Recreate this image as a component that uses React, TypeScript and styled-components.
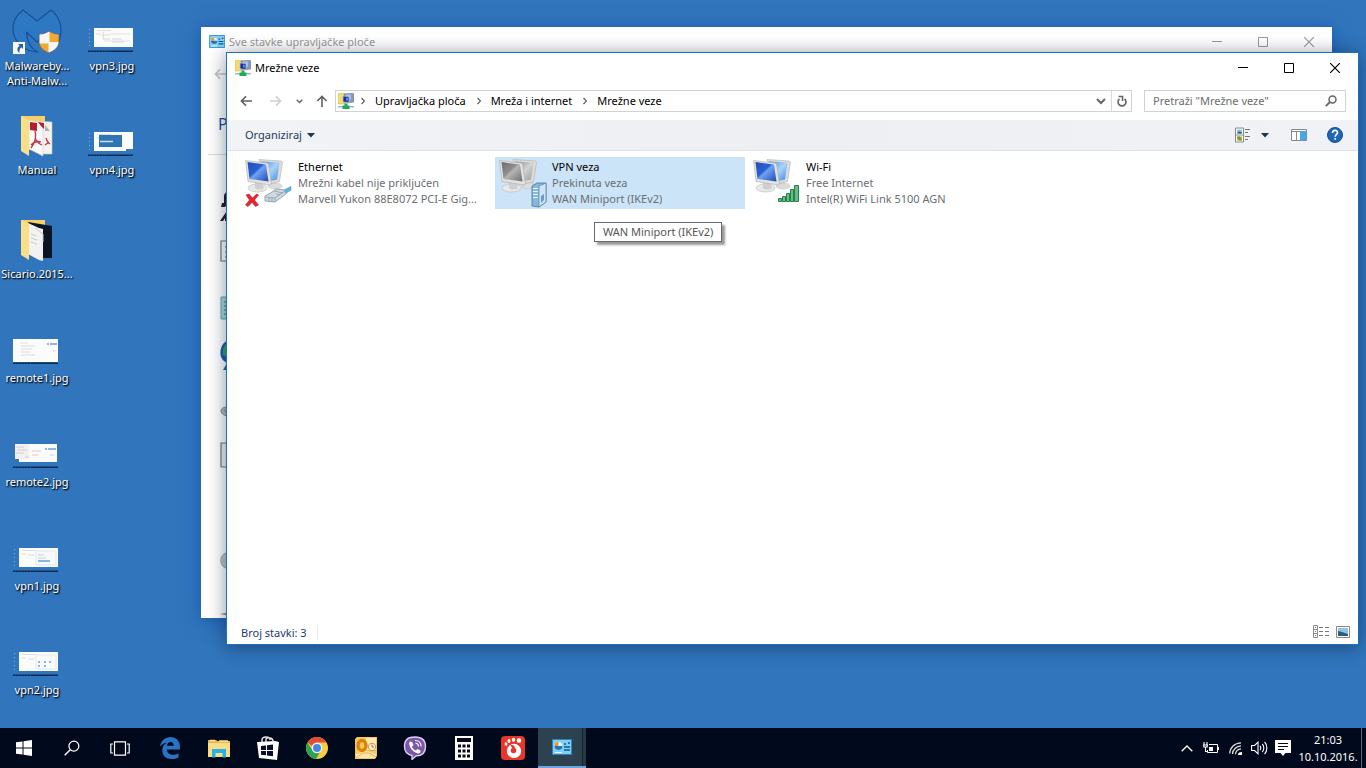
import React from 'react';
import styled, { createGlobalStyle } from 'styled-components';

const GlobalStyle = createGlobalStyle`
  * { box-sizing: border-box; }
  html, body { margin: 0; height: 100%; }
  body {
    font: 11px/16px "Noto Sans", "Open Sans", sans-serif;
    color: #000;
    overflow: hidden;
  }
  button, input { font: inherit; color: inherit; }
  button { background: none; border: 0; padding: 0; cursor: default; }
  a { color: inherit; text-decoration: none; }
  ul, ol { list-style: none; margin: 0; padding: 0; }
  h1, h2, p { margin: 0; font: inherit; }
  svg { display: block; flex: none; }
`;

const Screen = styled.div`
  display: flex;
  flex-direction: column;
  min-height: 100vh;
  background: #3176bd;
`;

const Desktop = styled.main`
  position: relative;
  flex: 1;
`;

/* ---------- desktop shortcuts ---------- */

const ShortcutGrid = styled.ul`
  display: grid;
  grid-auto-flow: column;
  grid-template-rows: repeat(7, 104px);
  grid-auto-columns: 75px;
`;

const Shortcut = styled.button`
  display: flex;
  flex-direction: column;
  align-items: center;
  gap: 4px;
  width: 100%;
  padding: 6px 1px 0 0;
  color: #fff;
  line-height: 15px;
  text-shadow: 1px 1px 2px #000, 1px 1px 1px #0a2a50;
`;

/* ---------- windows ---------- */

const Window = styled.section<{ $active?: boolean }>`
  position: absolute;
  display: flex;
  flex-direction: column;
  top: ${(p) => (p.$active ? 52 : 26)}px;
  left: ${(p) => (p.$active ? 226 : 200)}px;
  right: ${(p) => (p.$active ? 7 : 33)}px;
  bottom: ${(p) => (p.$active ? 83 : 109)}px;
  background: #fff;
  border: 1px solid ${(p) => (p.$active ? '#1a73bf' : '#2b69a8')};
  box-shadow: ${(p) => (p.$active
    ? '0 2px 18px rgba(0, 0, 0, 0.36), 0 2px 18px rgba(0, 80, 190, 0.12)'
    : '0 2px 16px rgba(0, 60, 170, 0.5)')};
  overflow: ${(p) => (p.$active ? 'visible' : 'hidden')};
`;

const TitleBar = styled.header<{ $dim?: boolean }>`
  display: flex;
  align-items: center;
  height: 29px;
  padding-left: 8px;
  color: ${(p) => (p.$dim ? '#999' : '#000')};
  h1, h2 { flex: 1; padding-left: 4px; }
`;

const CaptionButton = styled.button`
  display: grid;
  place-items: center;
  width: 46px;
  height: 29px;
`;

const NavRow = styled.nav`
  display: flex;
  align-items: center;
  height: 38px;
  padding: 0 12px 0 2px;
`;

const NavButton = styled.button<{ $w: number }>`
  display: grid;
  place-items: center;
  width: ${(p) => p.$w}px;
  height: 22px;
`;

const AddressBar = styled.div`
  display: flex;
  align-items: stretch;
  flex: 1;
  height: 22px;
  border: 1px solid #d2d2d2;
  padding-left: 2px;
`;

const Crumbs = styled.ol`
  display: flex;
  align-items: center;
  gap: 11px;
  flex: 1;
  li { display: flex; align-items: center; gap: 10px; }
  li:first-child { margin-right: -4px; }
`;

const AddressButton = styled.button<{ $divided?: boolean }>`
  display: grid;
  place-items: center;
  width: 20px;
  border-left: ${(p) => (p.$divided ? '1px solid #d9d9d9' : '0')};
`;

const SearchBox = styled.label`
  display: flex;
  align-items: center;
  width: 202px;
  height: 22px;
  margin-left: 12px;
  padding: 0 8px;
  border: 1px solid #d2d2d2;
  input {
    flex: 1;
    min-width: 0;
    border: 0;
    padding: 0;
    outline: 0;
    background: none;
  }
  input::placeholder { color: #6d6d6d; opacity: 1; }
`;

const CommandBar = styled.div`
  display: flex;
  align-items: center;
  height: 31px;
  padding: 0 15px 0 18px;
  color: #1e3a55;
  background: linear-gradient(90deg, #f2f3f6, #edeff2 50%, #f0f2f5);
  border-bottom: 1px solid #dfe1e8;
`;

const MenuButton = styled.button`
  display: flex;
  align-items: center;
  gap: 5px;
`;

const CommandGroup = styled.div`
  display: flex;
  align-items: center;
  margin-left: auto;
  gap: 20px;
`;

const ViewButton = styled(MenuButton)`
  gap: 10px;
  padding-right: 2px;
`;

const Connections = styled.ul`
  display: flex;
  flex-wrap: wrap;
  align-content: flex-start;
  flex: 1;
  gap: 4px;
  padding: 6px 14px;
`;

const ConnectionItem = styled.li`
  position: relative;
  width: 250px;
`;

const Connection = styled.button<{ $selected?: boolean }>`
  display: flex;
  gap: 5px;
  width: 100%;
  height: 52px;
  padding: 0 2px;
  text-align: left;
  color: #6b6e73;
  background: ${(p) => (p.$selected ? '#cce4f7' : 'none')};
`;

const ConnectionText = styled.span`
  display: flex;
  flex-direction: column;
  min-width: 0;
  padding-top: 2px;
  strong { font-weight: 400; color: #000; }
  span {
    overflow: hidden;
    text-overflow: ellipsis;
    white-space: nowrap;
  }
`;

const Tooltip = styled.div`
  position: absolute;
  top: 65px;
  left: 99px;
  padding: 1px 8px;
  color: #575757;
  white-space: nowrap;
  background: #fff;
  border: 1px solid #6a6a6a;
  box-shadow: 3px 3px 2px rgba(0, 0, 0, 0.4);
`;

const StatusBar = styled.footer`
  display: flex;
  align-items: center;
  justify-content: space-between;
  height: 22px;
  padding: 0 8px 0 14px;
  color: #1e3a6e;
`;

const ItemCount = styled.span`
  padding-right: 10px;
  border-right: 1px solid #ececec;
`;

const ViewModes = styled.div`
  display: flex;
  gap: 7px;
  padding-bottom: 3px;
`;

/* ---------- window behind ---------- */

const BackNav = styled.div`
  display: flex;
  align-items: center;
  height: 36px;
  padding: 0 0 0 13px;
`;

const BackBody = styled.div`
  flex: none;
`;

const BackHeading = styled.p`
  margin: 0 7px 24px;
  padding: 20px 10px 18px;
  font-size: 16px;
  line-height: 24px;
  color: #1d4f96;
  border-bottom: 1px solid #dcdcdc;
`;

const AppletList = styled.ul`
  padding-left: 19px;
  li { display: flex; align-items: center; height: 51px; }
`;

/* ---------- taskbar ---------- */

const Taskbar = styled.footer`
  display: flex;
  height: 40px;
  color: #fff;
  background: #01091c;
`;

const TaskGroup = styled.div<{ $gap?: number }>`
  display: flex;
  gap: ${(p) => p.$gap ?? 0}px;
  &:first-child { margin-right: 2px; }
`;

const TaskButton = styled.button<{ $active?: boolean }>`
  display: grid;
  place-items: center;
  width: 48px;
  height: 40px;
  background: ${(p) => (p.$active ? 'linear-gradient(90deg, #2d424e 44px, #14242f 44px, #14242f 45px, #263a45 45px)' : 'none')};
  border-bottom: ${(p) => (p.$active ? '2px solid #6aa5dc' : '0')};
`;

const Tray = styled.div`
  display: flex;
  align-items: center;
  margin-left: auto;
`;

const TrayButton = styled.button`
  display: grid;
  place-items: center;
  width: 24px;
  height: 40px;
`;

const Clock = styled.time`
  width: 66px;
  text-align: center;
  line-height: 17px;
`;

const ShowDesktop = styled.button`
  width: 5px;
  height: 40px;
  border-left: 1px solid #5d6470;
`;

/* ---------- drawings ---------- */

const MalwareIcon = () => (
  <svg width="52" height="48" viewBox="0 0 52 48">
    <path d="M12 4C5 9 1 17 2 25c1 9 8 16 15 19 4 2 8 2 10 2-7-3-11-9-11.500-20l10.500 10 11-10v10l9 2c3-4 4-9 4-14 0-8-4-16-10-20L26 15z" fill="#2d78c2" stroke="#15509c" strokeWidth="1.200" strokeLinejoin="round" />
    <path d="M38 25c3 2 6 3 10 3v9c-1 5-5 8-10 10-5-2-9-5-10-10v-9c4 0 7-1 10-3z" fill="#f5f5f5" />
    <path d="M47.500 28c-4 0-6.500-1-9-2.500V36h9.500zM28 37.500h9.500V46.500C33 45 29 42 28 37.500z" fill="#f4a92e" />
    <path d="M28 28c4 0 7-1 10-3 3 2 6 3 10 3v9c-1 5-5 8-10 10-5-2-9-5-10-10z" fill="none" stroke="#4a5f78" strokeWidth=".9" />
    <path d="M2 36h12v12H2z" fill="#f6f8fb" />
    <path d="M7 38h5v5l-1.700-1.700C8.500 43 8 45 8.500 47 5.500 45 6 41.500 8.700 39.700z" fill="#2a5f9f" />
  </svg>
);

const FolderIcon = ({ dark }: { dark?: boolean }) => (
  <svg width="32" height="48" viewBox="0 0 32 48">
    <path d="M0 6h24v34H0z" fill="#f5cf68" />
    {dark ? (
      <>
        <path d="M7 8l24 4v32H18z" fill="#0c1622" />
        <path d="M7 9l11 5 4 1v32l-4-1-11-6z" fill="#f2f2f0" />
        <path d="M14 14l8 6v8M10 20l5 2M10 24l6 2M10 28l6 2" stroke="#c9c9c4" fill="none" />
      </>
    ) : (
      <>
        <path d="M16 11l15 1v32H18z" fill="#f4f2ef" stroke="#cfc7bb" strokeWidth=".6" />
        <path d="M8 10l9 2 5 4v30l-14-7z" fill="#fafafa" stroke="#d5cdc0" strokeWidth=".6" />
        <path d="M9 12l7 1v8l-7-1zM17 12l6 1v6l-3-3z" fill="#b51f2a" />
        <path d="M14 21c2 7-1 13-4 17M14 28c2 4 4 6 7 7M10 35c3-3 7-4 10-3M25 28c1 3 2 5 4 6M24 35l4-3" stroke="#c03340" strokeWidth="1.300" fill="none" />
        <path d="M24 15l5 6h-5z" fill="#aab0ba" />
      </>
    )}
    <path d="M0 6l8 4v36L0 41z" fill="#fbdf86" />
  </svg>
);

type ThumbKind = 'remote1' | 'remote2' | 'vpn1' | 'vpn2' | 'vpn3' | 'vpn4';

const Thumb = ({ kind }: { kind: ThumbKind }) => (
  <svg width="48" height="48" viewBox="0 0 48 48">
    <path d="M0 44.500h45v1.500H0z" fill="#072b50" />
    <path d="M2 45h18" stroke="#4f7aa6" strokeWidth=".6" strokeDasharray="1 2" />
    {kind === 'remote1' && (
      <>
        <path d="M0 21h45v23H0z" fill="#fcfcfc" />
        <path d="M7 25h8M8 28h14M8 31h11M8 34h9M8 37h14M40 33h3" stroke="#dcd9e0" />
        <path d="M34 26h2M37 26h7" stroke="#6da0dc" strokeWidth="1.500" />
      </>
    )}
    {kind === 'remote2' && (
      <>
        <path d="M6 22h38v18H6z" fill="#fbfbfb" />
        <path d="M2 22h14v15H2z" fill="#f3f1ef" />
        <path d="M3 25h8M4 28h10M3 31h8M12 35h4M19 29h9M19 33h6M37 33h4" stroke="#d3cecb" />
        <path d="M32 27h2M35 27h8" stroke="#6da0dc" strokeWidth="1.500" />
      </>
    )}
    {kind !== 'remote1' && kind !== 'remote2' && (
      <>
        <path d="M1.500 23v20" stroke="#6fb4e8" strokeDasharray="1 3" />
        <path d="M6 22h39v19H6z" fill="#fafbfb" />
        <path d="M9 24.500h14M8 28h5M15 29h7" stroke="#dedde0" />
      </>
    )}
    {kind === 'vpn1' && (
      <>
        <path d="M23 25h20v14H23z" fill="#f6f8f9" stroke="#dfe3e8" strokeWidth=".8" />
        <path d="M25 35h12" stroke="#5ea3de" strokeWidth="1.500" />
        <path d="M25 29h6M25 32h8" stroke="#ccd2da" />
      </>
    )}
    {kind === 'vpn2' && (
      <>
        <path d="M23 25h20v14H23z" fill="#f9fafa" stroke="#dfe3e8" strokeWidth=".8" />
        <path d="M25 32h2M31 32h2M36 32h2M25 36h2M31 36h2" stroke="#62a3d8" strokeWidth="1.500" />
      </>
    )}
    {kind === 'vpn3' && (
      <>
        <path d="M22 28h21M16 35h26" stroke="#e0e1e4" />
        <path d="M15 26v7h7M24 33h10M24 36h12" stroke="#d6d7db" fill="none" />
      </>
    )}
    {kind === 'vpn4' && (
      <>
        <path d="M11 25h23v12H11z" fill="#2f74b5" />
        <path d="M12 31.500h13" stroke="#c8e0f3" strokeWidth="1.500" />
        <path d="M38 41h7v-2h-7z" fill="#337bbf" />
      </>
    )}
  </svg>
);

const PanelIcon = ({ big }: { big?: boolean }) => (
  <svg width={big ? 20 : 16} height={big ? 16 : 13} viewBox="0 0 20 16">
    <path d="M.5.500h19v15H.5z" fill="#7fd0f4" stroke="#2a84bd" />
    <circle cx="6.500" cy="7" r="4" fill="#e6f6fd" />
    <path d="M6.500 7V3a4 4 0 0 0-4 4z" fill="#f0942c" />
    <path d="M6.500 7h4a4 4 0 0 1-8 0z" fill="#2077bd" />
    <path d="M12 5h2M16 4h2M12 8h6M12 11h6" stroke="#0e5a96" strokeWidth="1.500" />
    <path d="M3 13.500h7" stroke="#fff" />
  </svg>
);

const NetworkIcon = () => (
  <svg width="16" height="16" viewBox="0 0 16 16">
    <path d="M0 1l4-1h3v11H0z" fill="#f2dc6e" stroke="#c6ab43" strokeWidth=".5" />
    <path d="M6 1l8-1 2 1v8l-6 1-4-1z" fill="#8a9ab6" stroke="#6b7b98" strokeWidth=".5" />
    <path d="M8 1.500l5 0v5l-5 1z" fill="#a8bff0" />
    <path d="M5 3l6 .5v6L5 9z" fill="#1d2f9d" stroke="#b8c0d0" strokeWidth=".8" />
    <path d="M8 4.500l2 .3v3l-2-.3z" fill="#5e7be8" />
    <path d="M0 13h16v1.500H0z" fill="#9db6c4" />
    <path d="M6.500 10.500h3v2h2v3.500h-7v-3.500h2z" fill="#1faa59" />
  </svg>
);

const Monitors = ({ gray }: { gray?: boolean }) => {
  const id = gray ? 'gray' : 'blue';
  return (
    <>
      <defs>
        <linearGradient id={`${id}-front`} x1="0" y1="0" x2="1" y2="1">
          <stop offset="0" stopColor={gray ? '#6b6b6b' : '#2450b8'} />
          <stop offset=".42" stopColor={gray ? '#8f8f8f' : '#2a5fd4'} />
          <stop offset=".5" stopColor={gray ? '#b5b5b5' : '#6fa3f2'} />
          <stop offset="1" stopColor={gray ? '#6f6f6f' : '#1d46b4'} />
        </linearGradient>
        <linearGradient id={`${id}-back`} x1="0" y1="0" x2="1" y2="1">
          <stop offset="0" stopColor={gray ? '#8d8d8d' : '#4c8bea'} />
          <stop offset=".5" stopColor={gray ? '#d2d2d2' : '#a9d3fa'} />
          <stop offset="1" stopColor={gray ? '#999' : '#3f83e0'} />
        </linearGradient>
      </defs>
      <ellipse cx="32" cy="29" rx="7" ry="3" fill="#dcdcdc" stroke="#c4c4c4" strokeWidth=".6" />
      <path d="M16 2.500l22 1.500 1.500 1-3 19.500L27 27z" fill="#dcdcda" stroke="#b0b0ae" strokeWidth=".6" />
      <path d="M18 4.500l18.500 1L34 22.500l-8 2z" fill={`url(#${id}-back)`} />
      <ellipse cx="14.500" cy="31" rx="9.500" ry="4" fill="#e9e9e9" stroke="#c2c2c2" strokeWidth=".7" />
      <path d="M12 25l7 1 2 5c-3 2-7 2-9 0z" fill="#cfcfcf" />
      <path d="M2.500 3.500L24 6l1.500 1 3 20-1.500 1L5 24.500z" fill="#e2e2e0" stroke="#acacaa" strokeWidth=".6" />
      <path d="M4.500 5l18.500 2.500 2.500 17-19-2.500z" fill={`url(#${id}-front)`} />
    </>
  );
};

const EthernetIcon = () => (
  <svg width="50" height="52" viewBox="0 0 50 52">
    <Monitors />
    <path d="M39 34l9-4.500v3.500l-6 4z" fill="#58b4e4" stroke="#3a8fc0" strokeWidth=".5" />
    <path d="M22 39l7-4 4-3 9 1 1 4-11 8-10-1z" fill="#cfd9df" stroke="#8495a0" strokeWidth=".8" />
    <path d="M23 40l9 1v4M32 41l10-7M26 41v4M29 41v4M33 37l4 1M31 34l9 2" fill="none" stroke="#8da3b2" strokeWidth=".9" />
    <path d="M3 38l3-1 3.500 4 4-4 2 1-4 5 4 5-3 1.500-3.500-4-4 4L2.500 48l4-5z" fill="#e8242b" stroke="#c2252c" strokeWidth=".6" />
  </svg>
);

const VpnIcon = () => (
  <svg width="50" height="52" viewBox="0 0 50 52">
    <Monitors gray />
    <path d="M35 29l5-3h9v19l-7 5-7-1z" fill="#86b7de" stroke="#47759f" strokeWidth=".8" />
    <path d="M42 29l7-3v19l-7 5z" fill="#cfe3f3" stroke="#47759f" strokeWidth=".6" />
    <path d="M36 31.500h5M36 34.500h5M36 37.500h5M36 40.500h5" stroke="#eaf5fd" strokeWidth="1.200" />
    <path d="M44 39l3-2v6l-3 3z" fill="#6d9dc8" />
  </svg>
);

const WifiConnectionIcon = () => (
  <svg width="50" height="52" viewBox="0 0 50 52">
    <Monitors />
    <g fill="#5fc184" stroke="#1c7442" strokeWidth=".9">
      <path d="M27.500 41.500h3v3h-3zM31.500 39.500h3v5h-3zM35.500 36.500h3v8h-3zM39.500 32.500h3v12h-3zM43.500 28.500h4v16h-4z" />
    </g>
  </svg>
);

const MinimizeGlyph = () => (
  <svg width="10" height="10"><path d="M0 4.500h10" stroke="currentColor" /></svg>
);
const MaximizeGlyph = () => (
  <svg width="10" height="10"><path d="M.5.500h9v9H.5z" fill="none" stroke="currentColor" /></svg>
);
const CloseGlyph = () => (
  <svg width="10" height="10"><path d="M0 0l10 10M10 0L0 10" stroke="currentColor" strokeWidth="1.200" /></svg>
);

const Arrow = ({ dir, color }: { dir: 'left' | 'right' | 'up'; color: string }) => {
  const d = {
    left: 'M13 6.500H1.500M6.500 1.500l-5 5 5 5',
    right: 'M0 6.500h11.500M6.500 1.500l5 5-5 5',
    up: 'M6.500 13V1.500M1.500 6.500l5-5 5 5',
  }[dir];
  return (
    <svg width="12" height="12" viewBox="0 0 13 13">
      <path d={d} fill="none" stroke={color} strokeWidth="1.700" />
    </svg>
  );
};

const CrumbChevron = () => (
  <svg width="4" height="8" viewBox="0 0 4 8">
    <path d="M.5 1l3 3-3 3" fill="none" stroke="#5c5c5c" strokeWidth="1.200" />
  </svg>
);

const Caret = () => (
  <svg width="8" height="5"><path d="M0 0h8L4 4.500z" fill="#16394f" /></svg>
);

const ViewIcon = () => (
  <svg width="16" height="16" viewBox="0 0 16 16">
    <path d="M.5 1h8v14h-8zM.5 8h8" fill="#fff" stroke="#888" />
    <path d="M2 2.500h5v4H2z" fill="#8cc3ea" />
    <path d="M2 6.500l2-2 3 1v1z" fill="#24536e" />
    <path d="M2 9.500h5v4H2z" fill="#f0a03a" />
    <path d="M2 9.500h3l2 4H4z" fill="#55a447" />
    <path d="M10 2.500h5M10 5.500h3M10 9.500h5M10 12.500h3" stroke="#777" />
  </svg>
);

const PaneIcon = () => (
  <svg width="16" height="12" viewBox="0 0 16 12">
    <path d="M.5.500h15v11H.5zM.5 2.500h15M5.500 2.500v9" fill="#fff" stroke="#888" />
    <path d="M9 2h6.500v9.500H9z" fill="#4aa6e6" />
  </svg>
);

const HelpIcon = () => (
  <svg width="16" height="16" viewBox="0 0 16 16">
    <circle cx="8" cy="8" r="7.500" fill="#1f66b8" stroke="#174f92" />
    <path d="M5.500 6c0-3.500 5-3.500 5-.3 0 1.800-2.300 1.800-2.300 4M8.200 11v1.800" fill="none" stroke="#fff" strokeWidth="1.700" />
  </svg>
);

const DetailsIcon = () => (
  <svg width="16" height="13" viewBox="0 0 16 13">
    <path d="M.5.500h4v12h-4zM.5 4.500h4M.5 8.500h4" fill="none" stroke="#8a8a8a" />
    <path d="M2 2.500h1M2 6.500h1M2 10.500h1M6 2.500h4M12 2.500h4M6 6.500h4M12 6.500h4M6 10.500h4M12 10.500h4" stroke="#777" />
  </svg>
);

const LargeIconsIcon = () => (
  <svg width="14" height="12" viewBox="0 0 14 12">
    <path d="M.5.500h13v11H.5z" fill="#fff" stroke="#8d8486" />
    <path d="M2 2h10v8H2z" fill="#8fc4e8" />
    <path d="M2 5l4 1 6 2v2H2z" fill="#2a5f72" />
  </svg>
);

const Applets = [
  <g key="a"><path d="M9 1L4 8v8H2l-1 4h4l4-5zM9 21L0 34h3l2-3v3h3l1-4z" fill="#2c1a30" /><path d="M9 6l-3 5v5l3-2z" fill="#c66a34" /><path d="M9 22l-3 4 3 3z" fill="#2742a0" /></g>,
  <path key="b" d="M10 3H1v20h9M5 9h5M5 14h5M5 19h5" fill="none" stroke="#777" strokeWidth="1.200" />,
  <g key="c"><path d="M1 8h9v22H1z" fill="#a3dcdc" stroke="#6fa3a5" /><path d="M4 13h6M4 17h6M4 21h6M4 25h6" stroke="#35787a" strokeDasharray="2 1" /></g>,
  <g key="d"><path d="M9 0C2 2-1 10 1 17c2 4 5 6 8 6z" fill="#2458b8" /><path d="M9 2C4 4 2 10 3 15l6 3z" fill="#34a84a" /><path d="M3 30l5-9h1v6l-3 3z" fill="#2b62c2" /></g>,
  <path key="e" d="M9 17c-4-2-8 0-8 3s4 5 8 5zM4 18l3 5" fill="#bbb" stroke="#888" />,
  <path key="f" d="M10 1H1v24h9" fill="#f1f1f1" stroke="#777" strokeWidth="1.200" />,
  <path key="g" d="M6 2h2v22H6z" fill="#edc975" />,
  <path key="h" d="M9 8c-6 1-9 5-8 10s4 6 8 7z" fill="#b9c6cc" stroke="#99a6ad" />,
  <path key="i" d="M0 19l9-2v4z" fill="#999" />,
];

const StartIcon = () => (
  <svg width="16" height="16" viewBox="0 0 16 16">
    <path d="M0 2.300l6.500-.9v6.100H0zM7.500 1.200L16 0v7.500H7.500zM0 8.500h6.500v6.100L0 13.700zM7.500 8.500H16V16l-8.500-1.200z" fill="#fff" />
  </svg>
);

const SearchTaskIcon = () => (
  <svg width="16" height="16" viewBox="0 0 17 17">
    <circle cx="10.500" cy="6.500" r="5.300" fill="none" stroke="#fff" strokeWidth="1.300" />
    <path d="M6.700 10.300L.7 16.300" stroke="#fff" strokeWidth="1.500" />
  </svg>
);

const TaskViewIcon = () => (
  <svg width="20" height="15" viewBox="0 0 20 15">
    <path d="M4.500.800h11v13.400h-11zM3 3H.8v9H3M17 3h2.200v9H17" fill="none" stroke="#fff" strokeWidth="1.200" />
  </svg>
);

const EdgeIcon = () => (
  <svg width="20" height="22" viewBox="0 0 20 22">
    <path d="M0 9.500C1 3.500 5.500 0 10.500 0 16 0 20 4 20 9.800v2.700H6.800c.3 4 3.400 5.200 6 5.200 2.200 0 4-.5 5.700-1.500v4.300c-2 1-4.300 1.500-6.700 1.500C6 22 2.300 18.500 2.300 13.500 2.300 10 4 7.300 7 5.800 4.500 6 1.800 7.300 0 9.500zM7 8.800h6.700c0-2.300-1-3.800-3.100-3.800C8.600 5 7.300 6.500 7 8.800z" fill="#2a73c4" />
  </svg>
);

const ExplorerIcon = () => (
  <svg width="22" height="19" viewBox="0 0 22 19">
    <path d="M0 1h8l1.500 1H22v16H0z" fill="#e8b84c" />
    <path d="M2 1.500h5M11 2h9" stroke="#f7e3a0" strokeWidth="1.500" />
    <path d="M0 4h22v14H0z" fill="#fbdc86" />
    <path d="M4 18.500V10h14v8.500h-3.500V14h-7v4.500z" fill="#2ab1e3" />
  </svg>
);

const StoreIcon = () => (
  <svg width="22" height="24" viewBox="0 0 22 24">
    <path d="M5 7V4c0-2 2-3 4-3s4 1 4 3M9 6V3.500C9 2 11 1.500 13 2s3 1.500 3 3" fill="none" stroke="#e8e8e8" strokeWidth="1.400" />
    <path d="M0 6l18-1 4 1-2 18L2 22z" fill="#fff" />
    <path d="M4 10l5-.6V14H4zM10 9.300l6-.8V14h-6zM4 15h5v4.300L4 18.800zM10 15h6v5.300l-6-.8z" fill="#06102a" />
  </svg>
);

const ChromeIcon = () => (
  <svg width="22" height="22" viewBox="0 0 22 22">
    <circle cx="11" cy="11" r="11" fill="#f7ce46" />
    <path d="M1.500 5.500a11 11 0 0 1 19 0H11a5.500 5.500 0 0 0-5 3.500z" fill="#dd4b3e" />
    <path d="M1.500 5.500A11 11 0 0 0 10 22l5-8.500a5 5 0 0 1-8.500 0z" fill="#2da154" />
    <circle cx="11" cy="11" r="5.200" fill="#f5f5f5" />
    <circle cx="11" cy="11" r="4" fill="#4688e8" />
  </svg>
);

const OutlookIcon = () => (
  <svg width="22" height="22" viewBox="0 0 22 22">
    <path d="M2 0h20v19l-2 3H0V2z" fill="#f6c85b" />
    <path d="M11 1h10v12H11z" fill="#fce9b4" />
    <path d="M1 17l10-3 10 3v4H1z" fill="#fbe5a6" />
    <ellipse cx="7" cy="8.500" rx="4" ry="5" fill="none" stroke="#d9820f" strokeWidth="3.400" />
    <circle cx="17" cy="10" r="3.700" fill="#fff7df" stroke="#d9952b" />
    <path d="M17 7.500V10h2" fill="none" stroke="#a86a10" />
    <path d="M1 21l7-5h6l7 4" fill="none" stroke="#e3b25c" />
  </svg>
);

const ViberIcon = () => (
  <svg width="24" height="24" viewBox="0 0 24 24">
    <path d="M12 1c7 0 10.500 2.500 10.500 9.500S19 20 13 20l-4 3.500V19.500C4 18.500 1.500 16 1.500 10.500 1.500 3.500 5 1 12 1z" fill="#7c57a8" stroke="#ddd0ee" strokeWidth="1.400" />
    <path d="M7 5.500l2 .5 1.500 3L9 10.500c.5 2 2 3.500 4 4l1.500-1.500 3 1.500V16c-1 2-3 1.500-5 .5-3-1.500-5-4-6-7-.500-2-.500-3 .5-4z" fill="#fff" />
    <path d="M12 4.500c4 0 6 2.500 6 6M12.500 7c2 .3 3 1.500 3 3.500" fill="none" stroke="#fff" strokeWidth="1.100" />
  </svg>
);

const CalculatorIcon = () => (
  <svg width="18" height="24" viewBox="0 0 18 24">
    <path d="M0 0h18v24H0z" fill="#fff" />
    <path d="M2 2h14v4H2z" fill="#04091c" />
    <path d="M3 10h12M3 15h12M3 20h12" stroke="#04091c" strokeWidth="3" strokeDasharray="3 1.500" />
  </svg>
);

const PawIcon = () => (
  <svg width="24" height="24" viewBox="0 0 24 24">
    <rect width="24" height="24" rx="4" fill="#e8362c" />
    <g fill="#fff">
      <ellipse cx="5" cy="8" rx="1.400" ry="1.800" /><ellipse cx="8" cy="5" rx="1.500" ry="1.900" />
      <ellipse cx="12.500" cy="3.800" rx="1.700" ry="2.100" /><ellipse cx="18" cy="4.500" rx="2.200" ry="2.600" />
      <circle cx="13" cy="15" r="7.200" />
    </g>
    <circle cx="12.500" cy="14.500" r="2.800" fill="#e8362c" />
    <path d="M9 8.500l4 1 1 2.500-2.500.5z" fill="#e8362c" />
  </svg>
);

const TrayChevron = () => (
  <svg width="12" height="7"><path d="M.7 6.300L6 1l5.300 5.300" fill="none" stroke="#fff" strokeWidth="1.300" /></svg>
);

const BatteryIcon = () => (
  <svg width="16" height="12" viewBox="0 0 16 12">
    <path d="M6 2.500h8.500v8H4.500V8M15.500 5v3" fill="none" stroke="#fff" />
    <path d="M6 5h4v4H6z" fill="#fff" />
    <path d="M1 0v2.500M4 0v2.500M0 3h5M.8 3v2h3.400V3M2.500 5v4.500h2" fill="none" stroke="#fff" strokeWidth="1.100" />
  </svg>
);

const WifiIcon = () => (
  <svg width="13" height="13" viewBox="0 0 13 13">
    <path d="M.7 11.500C1 5.500 5.500 1 12 .8M3.500 12c.3-4.500 4-7.900 8.500-8.100M6.500 12.300c.3-2.800 2.500-5.200 5.500-5.400" fill="none" stroke="#ddd" strokeWidth="1.300" />
    <path d="M9 13c0-2 1-3 4-3v3z" fill="#fff" />
  </svg>
);

const VolumeIcon = () => (
  <svg width="17" height="14" viewBox="0 0 17 14">
    <path d="M.6 4.500h3L7 1.200v11.600L3.600 9.500h-3z" fill="none" stroke="#fff" strokeWidth="1.100" />
    <path d="M9 5c1 1 1 3 0 4M11.300 3c2 2 2 6 0 8M13.600 1c3 3 3 9 0 12" fill="none" stroke="#fff" strokeWidth="1.100" />
  </svg>
);

const MessageIcon = () => (
  <svg width="16" height="16" viewBox="0 0 16 16">
    <path d="M0 0h16v13h-5.500L8 16l-2.500-3H0z" fill="#fff" />
    <path d="M3 3.500h10M3 6.500h10M3 9.500h6" stroke="#01091c" />
  </svg>
);

/* ---------- data ---------- */

const shortcuts: { name: string; lines?: string[]; icon: React.ReactNode }[] = [
  { name: 'Malwarebytes', lines: ['Malwareby...', 'Anti-Malw...'], icon: <MalwareIcon /> },
  { name: 'Manual', icon: <FolderIcon /> },
  { name: 'Sicario.2015...', icon: <FolderIcon dark /> },
  { name: 'remote1.jpg', icon: <Thumb kind="remote1" /> },
  { name: 'remote2.jpg', icon: <Thumb kind="remote2" /> },
  { name: 'vpn1.jpg', icon: <Thumb kind="vpn1" /> },
  { name: 'vpn2.jpg', icon: <Thumb kind="vpn2" /> },
  { name: 'vpn3.jpg', icon: <Thumb kind="vpn3" /> },
  { name: 'vpn4.jpg', icon: <Thumb kind="vpn4" /> },
];

const connections = [
  { name: 'Ethernet', status: 'Mrežni kabel nije priključen', device: 'Marvell Yukon 88E8072 PCI-E Gig...', icon: <EthernetIcon /> },
  { name: 'VPN veza', status: 'Prekinuta veza', device: 'WAN Miniport (IKEv2)', icon: <VpnIcon />, selected: true },
  { name: 'Wi-Fi', status: 'Free Internet', device: 'Intel(R) WiFi Link 5100 AGN', icon: <WifiConnectionIcon /> },
];

const crumbs = ['Upravljačka ploča', 'Mreža i internet', 'Mrežne veze'];

const taskApps: { label: string; icon: React.ReactNode; active?: boolean }[] = [
  { label: 'Edge', icon: <EdgeIcon /> },
  { label: 'Explorer', icon: <ExplorerIcon /> },
  { label: 'Store', icon: <StoreIcon /> },
  { label: 'Chrome', icon: <ChromeIcon /> },
  { label: 'Outlook', icon: <OutlookIcon /> },
  { label: 'Viber', icon: <ViberIcon /> },
  { label: 'Kalkulator', icon: <CalculatorIcon /> },
  { label: 'GOM Player', icon: <PawIcon /> },
  { label: 'Upravljačka ploča', icon: <PanelIcon big />, active: true },
];

const Captions = () => (
  <>
    <CaptionButton aria-label="Minimiziraj"><MinimizeGlyph /></CaptionButton>
    <CaptionButton aria-label="Maksimiziraj"><MaximizeGlyph /></CaptionButton>
    <CaptionButton aria-label="Zatvori"><CloseGlyph /></CaptionButton>
  </>
);

const ControlPanelWindow = () => (
  <Window>
    <TitleBar $dim>
      <PanelIcon />
      <h2>Sve stavke upravljačke ploče</h2>
      <Captions />
    </TitleBar>
    <BackBody>
      <BackNav><Arrow dir="left" color="#c4c4c4" /></BackNav>
      <BackHeading>P</BackHeading>
      <AppletList>
        {Applets.map((drawing, i) => (
          <li key={i}><svg width="10" height="36" viewBox="0 0 10 36">{drawing}</svg></li>
        ))}
      </AppletList>
    </BackBody>
  </Window>
);

const ConnectionsWindow = () => (
  <Window $active>
    <TitleBar>
      <NetworkIcon />
      <h1>Mrežne veze</h1>
      <Captions />
    </TitleBar>
    <NavRow>
      <NavButton $w={34} aria-label="Natrag"><Arrow dir="left" color="#5f5f5f" /></NavButton>
      <NavButton $w={26} aria-label="Naprijed"><Arrow dir="right" color="#cfcfcf" /></NavButton>
      <NavButton $w={20} aria-label="Nedavno">
        <svg width="7" height="5"><path d="M.7.700l2.800 2.800L6.300.700" fill="none" stroke="#666" strokeWidth="1.400" /></svg>
      </NavButton>
      <NavButton $w={26} aria-label="Gore"><Arrow dir="up" color="#5f5f5f" /></NavButton>
      <AddressBar>
        <Crumbs>
          <li><NetworkIcon /></li>
          {crumbs.map((c) => (
            <li key={c}><CrumbChevron /><a href="#">{c}</a></li>
          ))}
        </Crumbs>
        <AddressButton aria-label="Prethodna mjesta">
          <svg width="10" height="7"><path d="M1 1l4 4 4-4" fill="none" stroke="#666" strokeWidth="2" /></svg>
        </AddressButton>
        <AddressButton $divided aria-label="Osvježi">
          <svg width="10" height="12" viewBox="0 0 10 12">
            <path d="M7.500 3.800A4 4 0 1 1 2.500 3.800" fill="none" stroke="#666" strokeWidth="1.600" />
            <path d="M1.500 1.500h4v4.500" fill="none" stroke="#666" strokeWidth="1.600" />
          </svg>
        </AddressButton>
      </AddressBar>
      <SearchBox>
        <input type="text" aria-label="Pretraži" placeholder={'Pretraži "Mrežne veze"'} />
        <svg width="12" height="12" viewBox="0 0 12 12">
          <circle cx="7.500" cy="4.500" r="3.500" fill="none" stroke="#666" strokeWidth="1.500" />
          <path d="M5 7L.8 11.200" stroke="#666" strokeWidth="1.800" />
        </svg>
      </SearchBox>
    </NavRow>
    <CommandBar>
      <MenuButton>Organiziraj <Caret /></MenuButton>
      <CommandGroup>
        <ViewButton aria-label="Prikaz"><ViewIcon /><Caret /></ViewButton>
        <MenuButton aria-label="Okno pregleda"><PaneIcon /></MenuButton>
        <MenuButton aria-label="Pomoć"><HelpIcon /></MenuButton>
      </CommandGroup>
    </CommandBar>
    <Connections>
      {connections.map((c) => (
        <ConnectionItem key={c.name}>
          <Connection $selected={c.selected}>
            {c.icon}
            <ConnectionText>
              <strong>{c.name}</strong>
              <span>{c.status}</span>
              <span>{c.device}</span>
            </ConnectionText>
          </Connection>
          {c.selected && <Tooltip role="tooltip">{c.device}</Tooltip>}
        </ConnectionItem>
      ))}
    </Connections>
    <StatusBar>
      <ItemCount>Broj stavki: 3</ItemCount>
      <ViewModes>
        <button aria-label="Detalji"><DetailsIcon /></button>
        <button aria-label="Velike ikone"><LargeIconsIcon /></button>
      </ViewModes>
    </StatusBar>
  </Window>
);

export default function App() {
  return (
    <Screen>
      <GlobalStyle />
      <Desktop>
        <ShortcutGrid>
          {shortcuts.map((s) => (
            <li key={s.name}>
              <Shortcut>
                {s.icon}
                <span>
                  {s.lines ? s.lines.map((l) => <React.Fragment key={l}>{l}<br /></React.Fragment>) : s.name}
                </span>
              </Shortcut>
            </li>
          ))}
        </ShortcutGrid>
        <ControlPanelWindow />
        <ConnectionsWindow />
      </Desktop>
      <Taskbar>
        <TaskGroup>
          <TaskButton aria-label="Start"><StartIcon /></TaskButton>
          <TaskButton aria-label="Pretraživanje"><SearchTaskIcon /></TaskButton>
          <TaskButton aria-label="Prikaz zadataka"><TaskViewIcon /></TaskButton>
        </TaskGroup>
        <TaskGroup $gap={1}>
          {taskApps.map((t) => (
            <TaskButton key={t.label} aria-label={t.label} $active={t.active}>{t.icon}</TaskButton>
          ))}
        </TaskGroup>
        <Tray>
          <TrayButton aria-label="Skrivene ikone"><TrayChevron /></TrayButton>
          <TrayButton aria-label="Baterija"><BatteryIcon /></TrayButton>
          <TrayButton aria-label="Mreža"><WifiIcon /></TrayButton>
          <TrayButton aria-label="Glasnoća"><VolumeIcon /></TrayButton>
          <TrayButton aria-label="Obavijesti"><MessageIcon /></TrayButton>
          <Clock>21:03<br />10.10.2016.</Clock>
          <ShowDesktop aria-label="Prikaži radnu površinu" />
        </Tray>
      </Taskbar>
    </Screen>
  );
}
